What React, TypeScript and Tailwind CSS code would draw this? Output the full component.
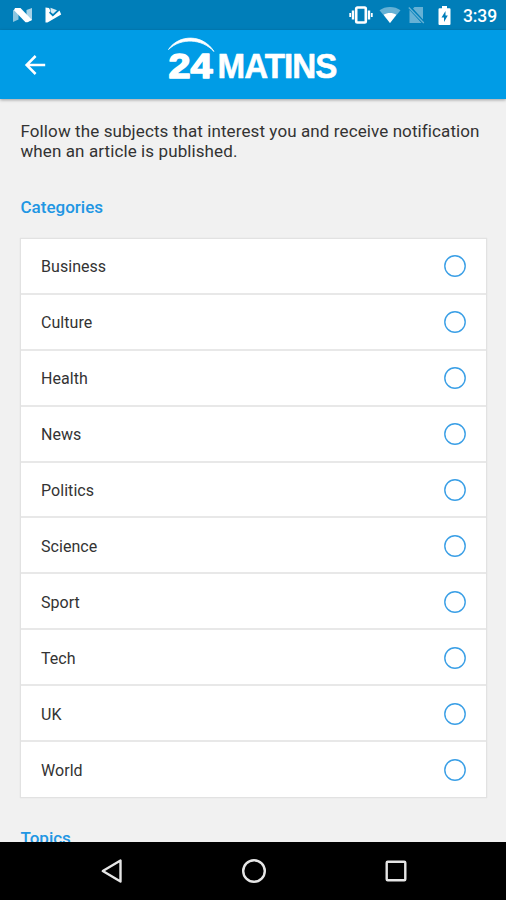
import { useState } from "react"

const categories = [
  "Business",
  "Culture",
  "Health",
  "News",
  "Politics",
  "Science",
  "Sport",
  "Tech",
  "UK",
  "World",
]

const StatusBar = () => (
  <div className="flex h-[30px] shrink-0 items-center justify-between bg-[#007eb9] pl-3 pr-[9px] text-white">
    <div className="flex items-center gap-[11px]">
      {/* Android Nougat */}
      <svg width="21" height="16" viewBox="0 0 21 16" fill="currentColor">
        <path d="M1 3.200L6.500 1v11.500L1 15z" opacity=".55" />
        <path d="M14.500 3L20 1v12l-5.500 2z" opacity=".65" />
        <path d="M3 1h5.500L20 13l-4.500 2.200h-2L2 3.200z" />
      </svg>
      {/* Play Protect */}
      <svg width="18" height="16" viewBox="0 0 18 16" fill="currentColor">
        <path d="M1.500.5L5 1l1.500 3L5 5.800 8.800 9.500 15.500 3.500 17.200 7.500 3.500 15.500h-2z" />
        <path d="M6.500.8l6.500 2.400L9 7 6.800 5.200z" opacity=".85" />
      </svg>
    </div>

    <div className="flex items-center">
      {/* Vibrate */}
      <svg width="24" height="18" viewBox="0 0 24 18" fill="none" stroke="currentColor">
        <rect x="7.200" y="1.500" width="9.600" height="15" rx="1.200" strokeWidth="2.600" />
        <path d="M4 4.500v9M20 4.500v9" strokeWidth="2.400" />
        <path d="M1.200 7v4M22.800 7v4" strokeWidth="1.800" />
      </svg>
      {/* Wifi */}
      <svg className="ml-[6px]" width="22" height="18" viewBox="0 0 22 18" fill="currentColor">
        <path d="M11 17L.5 4.300C6-.2 16-.2 21.500 4.300z" opacity=".4" />
        <path d="M11 17L4.600 8.800c3.600-2.400 9.200-2.400 12.800 0z" />
      </svg>
      {/* No SIM */}
      <svg className="ml-[7px]" width="17" height="18" viewBox="0 0 17 18" fill="currentColor" opacity=".4">
        <path d="M5 2.500L6.500 1H15v12.500z" />
        <path d="M1.500 4L13.500 17h-12z" />
        <path d="M.8 1.500l15 15.500" fill="none" stroke="currentColor" strokeWidth="1.300" />
      </svg>
      {/* Battery charging */}
      <svg className="ml-[13px]" width="13" height="19" viewBox="0 0 13 19">
        <path
          d="M4 0h5v2.200h2.500a1 1 0 0 1 1 1V18a1 1 0 0 1-1 1h-10a1 1 0 0 1-1-1V3.200a1 1 0 0 1 1-1H4z"
          fill="currentColor"
        />
        <path d="M7.500 5L3.500 11.500H6V16l3.800-6.500H7.500z" fill="#007eb9" />
      </svg>
      <span className="ml-[12px] w-[34px] whitespace-nowrap pt-px text-[17.5px] font-medium leading-[30px] tracking-[-0.1px]">
        3:39
      </span>
    </div>
  </div>
)

const Header = () => (
  <header className="relative z-10 flex h-[69px] shrink-0 items-center bg-[#009ce6] shadow-[0_1px_3px_rgba(0,0,0,0.35)]">
    <button aria-label="Back" className="ml-[24px] text-white">
      <svg width="22" height="22" viewBox="0 0 22 22" fill="none" stroke="currentColor" strokeWidth="2.500">
        <path d="M21.200 11H3M11.600 2L2.600 11l9 9" />
      </svg>
    </button>
    <svg className="ml-[118px]" width="180" height="60" viewBox="0 0 180 60" fill="white">
      <path d="M4.500 14.500C15-1 39-1 50 16.500C38 3.500 17 2.500 4.500 14.500z" stroke="white" strokeWidth=".8" />
      <g
        fontFamily="'Liberation Sans', Arial, sans-serif"
        fontWeight="700"
        stroke="white"
        strokeLinejoin="round"
      >
        <text x="4.500" y="43" fontSize="35" strokeWidth="1.500" textLength="44" lengthAdjust="spacingAndGlyphs">
          24
        </text>
        <text
          x="53.500"
          y="43"
          fontSize="35.500"
          strokeWidth=".6"
          letterSpacing="-1"
          textLength="119"
          lengthAdjust="spacingAndGlyphs"
        >
          MATINS
        </text>
      </g>
    </svg>
  </header>
)

type CategoryRowProps = {
  name: string
  selected: boolean
  onToggle: () => void
}

const CategoryRow = ({ name, selected, onToggle }: CategoryRowProps) => (
  <li className="h-[55.9px] border-b-2 border-[#e8e8e8] last:h-[54.9px] last:border-b-0">
    <button
      onClick={onToggle}
      aria-pressed={selected}
      className="flex h-full w-full items-center justify-between px-5 pt-px text-left text-[16px] tracking-[0.05px] text-[#333]"
    >
      <span className="pt-[2px]">{name}</span>
      <svg width="22" height="22" viewBox="0 0 22 22" fill={selected ? "#2196e3" : "none"}>
        <circle cx="11" cy="11" r="10.200" stroke="#3a9fe6" strokeWidth="1.400" />
      </svg>
    </button>
  </li>
)

const NavigationBar = () => (
  <nav className="flex h-[58px] shrink-0 items-center bg-black pl-[100px] text-[#e6e6e6]">
    <svg width="24" height="26" viewBox="0 0 24 26" fill="none" stroke="currentColor" strokeWidth="2.400">
      <path d="M20.500 2.500v21L2.800 13z" strokeLinejoin="round" />
    </svg>
    <svg className="ml-[117px]" width="26" height="26" viewBox="0 0 26 26" fill="none" stroke="currentColor" strokeWidth="2.400">
      <circle cx="13" cy="13" r="10.800" />
    </svg>
    <svg className="ml-[118px]" width="22" height="22" viewBox="0 0 22 22" fill="none" stroke="currentColor" strokeWidth="2.400">
      <rect x="1.700" y="1.700" width="18.600" height="18.600" rx="1" />
    </svg>
  </nav>
)

export default function App() {
  const [followed, setFollowed] = useState<string[]>([])

  const toggle = (name: string) =>
    setFollowed((prev) => (prev.includes(name) ? prev.filter((n) => n !== name) : [...prev, name]))

  return (
    <div className="flex h-[900px] w-[506px] flex-col overflow-hidden bg-[#f1f1f1] font-['Roboto',sans-serif]">
      <StatusBar />
      <Header />

      <main className="min-h-0 flex-1 overflow-hidden px-5 pt-[22px]">
        <p className="whitespace-nowrap pl-[0.5px] text-[17px] leading-[20px] tracking-[0.1px] text-[#333]">
          Follow the subjects that interest you and receive notification
          <br />
          when an article is published.
        </p>

        <h2 className="mt-[36px] pl-[0.5px] text-[17px] font-medium leading-[20px] text-[#2196e3]">Categories</h2>

        <ul className="mt-[21px] w-[467px] border border-[#e2e2e2] bg-white shadow-[0_0_1px_rgba(0,0,0,0.1)]">
          {categories.map((name) => (
            <CategoryRow
              key={name}
              name={name}
              selected={followed.includes(name)}
              onToggle={() => toggle(name)}
            />
          ))}
        </ul>

        <h2 className="mt-[30px] pl-[0.5px] text-[17px] font-medium leading-[20px] text-[#2196e3]">Topics</h2>
      </main>

      <NavigationBar />
    </div>
  )
}
